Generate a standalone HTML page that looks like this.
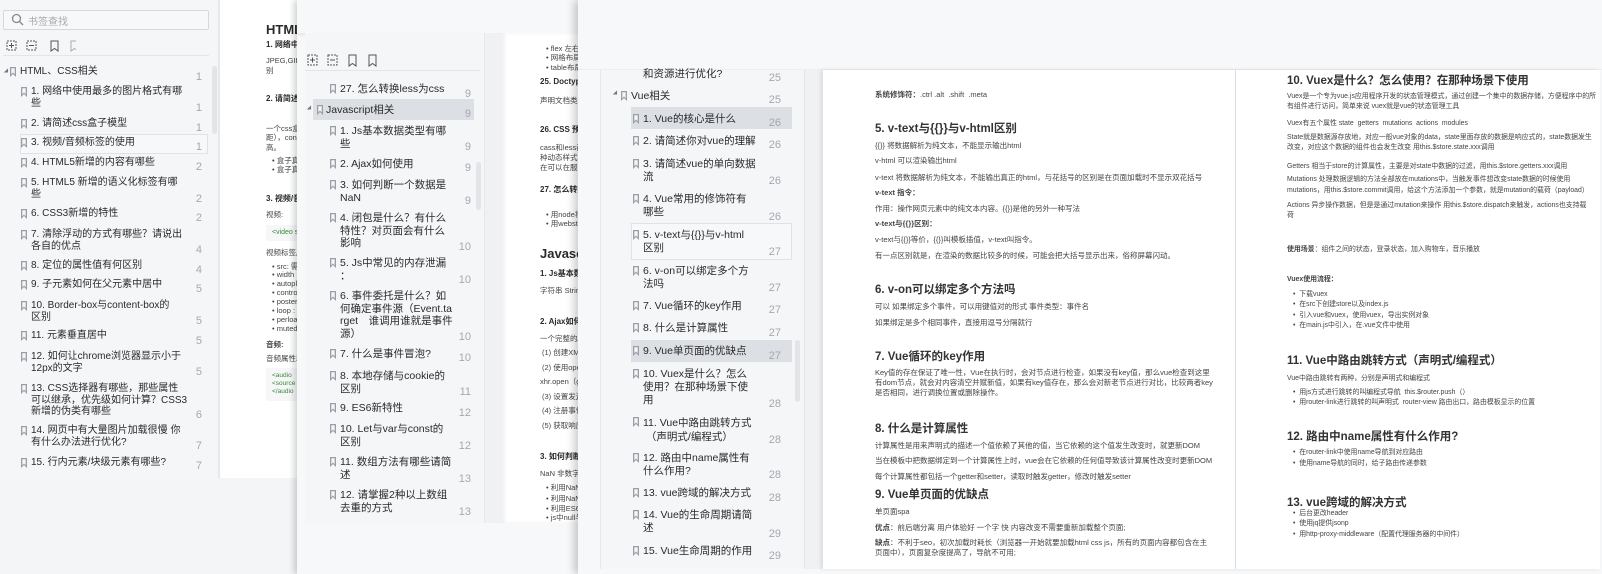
<!DOCTYPE html>
<html><head><meta charset="utf-8">
<style>
*{margin:0;padding:0;box-sizing:border-box}
body{width:1602px;height:574px;overflow:hidden;background:#f4f5f7;position:relative;font-family:"Liberation Sans","Noto Sans CJK SC",sans-serif;color:#2b2b2b}
.a{position:absolute}
.t{position:absolute;white-space:nowrap}
.win{position:absolute;overflow:hidden}
.it{position:absolute;font-size:10px;line-height:11.7px;color:#2a2a2a;white-space:nowrap}
.w2 .it{font-size:10.5px;line-height:12.5px}
.w3 .it{font-size:10.5px;line-height:13px}
.n{position:absolute;font-size:11px;color:#a3a8b0;text-align:right;width:20px}
.bm{position:absolute;width:6px;height:10px;background:#9a9ea6;clip-path:polygon(0 0,100% 0,100% 100%,50% 70%,0 100%)}
.bm::after{content:"";position:absolute;left:1.3px;top:1.3px;width:3.4px;height:6px;background:#f5f6f8;clip-path:polygon(0 0,100% 0,100% 100%,50% 70%,0 100%)}
.hl{position:absolute;background:#dcdfe4}
.bx{position:absolute;border:1px solid #dfe2e6;background:#f7f8fa}
.p{font-size:7.5px;color:#444}
.q{font-size:6.9px;color:#444}
.h{font-size:11.5px;font-weight:bold;color:#333}
.b{font-weight:bold}
.tri{position:absolute;width:0;height:0;border-left:3px solid transparent;border-right:3px solid transparent;border-top:4px solid #777}
</style></head><body>

<!-- WINDOW 1 -->
<div class="win" style="left:0;top:0;width:300px;height:478px;background:#f5f6f8">
  <div class="a" style="left:3px;top:10px;width:206px;height:20px;border:1px solid #d5d8dd;border-radius:2px;background:#f7f8fa"></div>
  <svg class="a" style="left:11px;top:13px" width="13" height="13"><circle cx="5.5" cy="5.5" r="4" fill="none" stroke="#888" stroke-width="1.3"/><line x1="8.5" y1="8.5" x2="12" y2="12" stroke="#888" stroke-width="1.3"/></svg>
  <div class="t" style="left:28px;top:13px;font-size:10px;color:#aaa">书签查找</div>
  <svg class="a" style="left:6px;top:40px" width="70" height="12" fill="none" stroke="#555" stroke-width="1"><rect x="1" y="1" width="9" height="9" stroke-dasharray="2 1"/><path d="M3 5.5h5M5.5 3v5"/><rect x="21" y="1" width="9" height="9" stroke-dasharray="2 1"/><path d="M23 5.5h5"/><path d="M45 1h7v10l-3.5-2.5L45 11z"/><path d="M65 1h7v10l-3.5-2.5L65 11z" stroke="#aaa"/></svg>
  <div class="a" style="left:3px;top:55px;width:206px;height:1px;background:#e3e5e8"></div>
  <div class="a" style="left:212px;top:66px;width:5px;height:68px;background:#e2e4e7;border-radius:3px"></div>
  <div class="tri" style="left:4px;top:70px;transform:rotate(-45deg);border-top-width:3px"></div>
  <div class="bm" style="left:10px;top:67px"></div><div class="it" style="left:20px;top:66px">HTML、CSS相关</div><div class="n" style="left:182px;top:71px">1</div>
  <div class="bm" style="left:21px;top:87px"></div><div class="it" style="left:31px;top:86px">1. 网络中使用最多的图片格式有哪<br>些</div><div class="n" style="left:182px;top:102px">1</div>
  <div class="bm" style="left:21px;top:119px"></div><div class="it" style="left:31px;top:118px">2. 请简述css盒子模型</div><div class="n" style="left:182px;top:122px">1</div>
  <div class="bx" style="left:20px;top:134px;width:188px;height:20px"></div>
  <div class="bm" style="left:21px;top:138px"></div><div class="it" style="left:31px;top:137px">3. 视频/音频标签的使用</div><div class="n" style="left:182px;top:141px">1</div>
  <div class="bm" style="left:21px;top:158px"></div><div class="it" style="left:31px;top:157px">4. HTML5新增的内容有哪些</div><div class="n" style="left:182px;top:161px">2</div>
  <div class="bm" style="left:21px;top:178px"></div><div class="it" style="left:31px;top:177px">5. HTML5 新增的语义化标签有哪<br>些</div><div class="n" style="left:182px;top:193px">2</div>
  <div class="bm" style="left:21px;top:209px"></div><div class="it" style="left:31px;top:208px">6. CSS3新增的特性</div><div class="n" style="left:182px;top:212px">2</div>
  <div class="bm" style="left:21px;top:230px"></div><div class="it" style="left:31px;top:229px">7. 清除浮动的方式有哪些？请说出<br>各自的优点</div><div class="n" style="left:182px;top:244px">4</div>
  <div class="bm" style="left:21px;top:261px"></div><div class="it" style="left:31px;top:260px">8. 定位的属性值有何区别</div><div class="n" style="left:182px;top:264px">4</div>
  <div class="bm" style="left:21px;top:280px"></div><div class="it" style="left:31px;top:279px">9. 子元素如何在父元素中居中</div><div class="n" style="left:182px;top:283px">5</div>
  <div class="bm" style="left:21px;top:301px"></div><div class="it" style="left:31px;top:300px">10. Border-box与content-box的<br>区别</div><div class="n" style="left:182px;top:315px">5</div>
  <div class="bm" style="left:21px;top:331px"></div><div class="it" style="left:31px;top:330px">11. 元素垂直居中</div><div class="n" style="left:182px;top:335px">5</div>
  <div class="bm" style="left:21px;top:352px"></div><div class="it" style="left:31px;top:351px">12. 如何让chrome浏览器显示小于<br>12px的文字</div><div class="n" style="left:182px;top:366px">5</div>
  <div class="bm" style="left:21px;top:384px"></div><div class="it" style="left:31px;top:383px">13. CSS选择器有哪些，那些属性<br>可以继承，优先级如何计算？CSS3<br>新增的伪类有哪些</div><div class="n" style="left:182px;top:409px">6</div>
  <div class="bm" style="left:21px;top:426px"></div><div class="it" style="left:31px;top:425px">14. 网页中有大量图片加载很慢 你<br>有什么办法进行优化?</div><div class="n" style="left:182px;top:440px">7</div>
  <div class="bm" style="left:21px;top:458px"></div><div class="it" style="left:31px;top:457px">15. 行内元素/块级元素有哪些?</div><div class="n" style="left:182px;top:460px">7</div>
  <div class="a" style="left:218px;top:0;width:2px;height:478px;background:#e6e8eb"></div>
  <div class="a" style="left:220px;top:0;width:80px;height:478px;background:#fff;overflow:hidden">
    <div class="t" style="left:46px;top:19px;font-size:13px;font-weight:bold">HTML、CSS相关</div>
    <div class="t" style="left:46px;top:39px;font-size:8px;font-weight:bold">1. 网络中使用最多的图片</div>
    <div class="t p" style="left:46px;top:56px">JPEG,GIF,PNG</div><div class="t p" style="left:46px;top:65px">别</div>
    <div class="t" style="left:46px;top:93px;font-size:8px;font-weight:bold">2. 请简述css盒子模型</div>
    <div class="t p" style="left:46px;top:123px">一个css盒子从外</div><div class="t p" style="left:46px;top:132px">距），content</div><div class="t p" style="left:46px;top:142px">高。</div>
    <div class="t p" style="left:52px;top:155px">• 盒子真实</div><div class="t p" style="left:52px;top:164px">• 盒子真实</div>
    <div class="t" style="left:46px;top:193px;font-size:8px;font-weight:bold">3. 视频/音频</div>
    <div class="t p" style="left:46px;top:209px">视频:</div>
    <div class="a" style="left:46px;top:225px;width:40px;height:16px;background:#f6f7f8"></div><div class="t" style="left:52px;top:229px;font-size:7px;color:#3a8a3a">&lt;video src</div>
    <div class="t p" style="left:46px;top:247px">视频标签属性</div>
    <div class="t p" style="left:52px;top:261px">• src: 需</div><div class="t p" style="left:52px;top:270px">• width</div><div class="t p" style="left:52px;top:279px">• autopl</div><div class="t p" style="left:52px;top:288px">• contro</div><div class="t p" style="left:52px;top:297px">• poster</div><div class="t p" style="left:52px;top:306px">• loop :</div><div class="t p" style="left:52px;top:315px">• perloa</div><div class="t p" style="left:52px;top:324px">• muted</div>
    <div class="t p" style="left:46px;top:339px;font-weight:bold">音频:</div>
    <div class="t p" style="left:46px;top:353px">音频属性和</div>
    <div class="a" style="left:46px;top:368px;width:40px;height:33px;background:#f6f7f8"></div>
    <div class="t" style="left:52px;top:372px;font-size:6.5px;color:#3a8a3a">&lt;audio</div><div class="t" style="left:52px;top:380px;font-size:6.5px;color:#3a8a3a">&lt;source</div><div class="t" style="left:52px;top:388px;font-size:6.5px;color:#3a8a3a">&lt;/audio</div>
  </div>
</div>

<!-- WINDOW 2 -->
<div class="win w2" style="left:297px;top:0;width:283px;height:574px;background:#f7f8fa;box-shadow:-3px 0 6px rgba(0,0,0,.18)">
  <div class="a" style="left:9px;top:22px;width:168px;height:21px;border:1px solid #d5d8dd;background:#f7f8fa"></div>
  <div class="t" style="left:39px;top:29px;font-size:10px;color:#aaa">书签查找</div>
  <div class="a" style="left:0;top:0;width:283px;height:33px;background:#f7f8fa;box-shadow:0 2px 3px rgba(0,0,0,.08)"></div>
  <div class="a" style="left:8px;top:33px;width:180px;height:490px;background:#f5f6f8"></div>
  <svg class="a" style="left:10px;top:54px" width="80" height="13" fill="none" stroke="#555" stroke-width="1"><rect x="1" y="1" width="9" height="10" stroke-dasharray="2 1"/><path d="M3 6h5M5.5 3.5v5"/><rect x="21" y="1" width="9" height="10" stroke-dasharray="2 1"/><path d="M23 6h5"/><path d="M42 1h7v11l-3.5-2.5L42 12z"/><path d="M62 1h7v11l-3.5-2.5L62 12z"/></svg>
  <div class="a" style="left:8px;top:70px;width:175px;height:1px;background:#e3e5e8"></div>
  <div class="a" style="left:187px;top:33px;width:1px;height:490px;background:#e6e8eb"></div>
  <div class="a" style="left:179px;top:162px;width:5px;height:48px;background:#e2e4e7;border-radius:3px"></div>
  <div class="bm" style="left:33px;top:84px"></div><div class="it" style="left:43px;top:83px">27. 怎么转换less为css</div><div class="n" style="left:154px;top:88px">9</div>
  <div class="hl" style="left:16px;top:99px;width:161px;height:21px"></div>
  <div class="tri" style="left:10px;top:107px;transform:rotate(-45deg);border-top-width:3px"></div>
  <div class="bm" style="left:20px;top:105px"></div><div class="it" style="left:29px;top:104px">Javascript相关</div><div class="n" style="left:154px;top:108px">9</div>
  <div class="bm" style="left:33px;top:126px"></div><div class="it" style="left:43px;top:125px">1. Js基本数据类型有哪<br>些</div><div class="n" style="left:154px;top:141px">9</div>
  <div class="bm" style="left:33px;top:159px"></div><div class="it" style="left:43px;top:158px">2. Ajax如何使用</div><div class="n" style="left:154px;top:162px">9</div>
  <div class="bm" style="left:33px;top:180px"></div><div class="it" style="left:43px;top:179px">3. 如何判断一个数据是<br>NaN</div><div class="n" style="left:154px;top:195px">9</div>
  <div class="bm" style="left:33px;top:213px"></div><div class="it" style="left:43px;top:212px">4. 闭包是什么？有什么<br>特性？对页面会有什么<br>影响</div><div class="n" style="left:154px;top:241px">10</div>
  <div class="bm" style="left:33px;top:258px"></div><div class="it" style="left:43px;top:257px">5. Js中常见的内存泄漏<br>：</div><div class="n" style="left:154px;top:274px">10</div>
  <div class="bm" style="left:33px;top:291px"></div><div class="it" style="left:43px;top:290px">6. 事件委托是什么？如<br>何确定事件源（Event.ta<br>rget　谁调用谁就是事件<br>源）</div><div class="n" style="left:154px;top:331px">10</div>
  <div class="bm" style="left:33px;top:349px"></div><div class="it" style="left:43px;top:348px">7. 什么是事件冒泡?</div><div class="n" style="left:154px;top:352px">10</div>
  <div class="bm" style="left:33px;top:371px"></div><div class="it" style="left:43px;top:370px">8. 本地存储与cookie的<br>区别</div><div class="n" style="left:154px;top:386px">11</div>
  <div class="bm" style="left:33px;top:403px"></div><div class="it" style="left:43px;top:402px">9. ES6新特性</div><div class="n" style="left:154px;top:407px">12</div>
  <div class="bm" style="left:33px;top:424px"></div><div class="it" style="left:43px;top:423px">10. Let与var与const的<br>区别</div><div class="n" style="left:154px;top:440px">12</div>
  <div class="bm" style="left:33px;top:457px"></div><div class="it" style="left:43px;top:456px">11. 数组方法有哪些请简<br>述</div><div class="n" style="left:154px;top:473px">13</div>
  <div class="bm" style="left:33px;top:490px"></div><div class="it" style="left:43px;top:489px">12. 请掌握2种以上数组<br>去重的方式</div><div class="n" style="left:154px;top:506px">13</div>
  <div class="a" style="left:188px;top:33px;width:18px;height:490px;background:#f0f1f3"></div>
  <div class="a" style="left:206px;top:33px;width:80px;height:490px;background:#fff;overflow:hidden;box-shadow:inset 2px 0 3px rgba(0,0,0,.06)">
    <div class="t p" style="left:43px;top:10px">• flex 左右</div><div class="t p" style="left:43px;top:19px">• 网格布局</div><div class="t p" style="left:43px;top:29px">• table布局</div>
    <div class="t" style="left:37px;top:44px;font-size:8px;font-weight:bold">25. Doctype</div>
    <div class="t p" style="left:37px;top:62px">声明文档类型</div>
    <div class="t" style="left:37px;top:91px;font-size:8px;font-weight:bold">26. CSS 预处</div>
    <div class="t p" style="left:37px;top:109px">cass和less都是</div><div class="t p" style="left:37px;top:119px">种动态样式语</div><div class="t p" style="left:37px;top:129px">在可以在服务</div>
    <div class="t" style="left:37px;top:151px;font-size:8px;font-weight:bold">27. 怎么转换</div>
    <div class="t p" style="left:43px;top:176px">• 用node将</div><div class="t p" style="left:43px;top:185px">• 用webstorm</div>
    <div class="t" style="left:37px;top:213px;font-size:13px;font-weight:bold">Javascript</div>
    <div class="t" style="left:37px;top:235px;font-size:8px;font-weight:bold">1. Js基本数据</div>
    <div class="t p" style="left:37px;top:252px">字符串 String</div>
    <div class="t" style="left:37px;top:283px;font-size:8px;font-weight:bold">2. Ajax如何</div>
    <div class="t p" style="left:37px;top:300px">一个完整的Ajax</div>
    <div class="t p" style="left:39px;top:314px">(1) 创建XML</div><div class="t p" style="left:39px;top:329px">(2) 使用open</div><div class="t p" style="left:37px;top:343px">xhr.open（get</div><div class="t p" style="left:39px;top:358px">(3) 设置发送</div><div class="t p" style="left:39px;top:372px">(4) 注册事件</div><div class="t p" style="left:39px;top:387px">(5) 获取响应</div>
    <div class="t" style="left:37px;top:418px;font-size:8px;font-weight:bold">3. 如何判断</div>
    <div class="t p" style="left:37px;top:435px">NaN 非数字 但</div>
    <div class="t p" style="left:43px;top:449px">• 利用NaN</div><div class="t p" style="left:43px;top:460px">• 利用NaN</div><div class="t p" style="left:43px;top:470px">• 利用ES6</div><div class="t p" style="left:43px;top:479px">• js中null与</div>
  </div>
</div>

<!-- WINDOW 3 -->
<div class="win w3" style="left:578px;top:0;width:1024px;height:574px;background:#f7f8fa;box-shadow:-4px 0 8px rgba(0,0,0,.2)">
  <div class="a" style="left:0;top:69px;width:1024px;height:1px;background:#eceef1"></div>
  <div class="a" style="left:22px;top:70px;width:205px;height:499px;background:#f5f6f8;border-left:1px solid #e6e8eb"></div>
  <div class="it" style="left:65px;top:68px">和资源进行优化?</div><div class="n" style="left:183px;top:72px">25</div>
  <div class="tri" style="left:35px;top:92px;transform:rotate(-45deg);border-top-width:3px"></div>
  <div class="bm" style="left:43px;top:91px"></div><div class="it" style="left:53px;top:90px">Vue相关</div><div class="n" style="left:183px;top:94px">25</div>
  <div class="hl" style="left:53px;top:107px;width:161px;height:22px"></div>
  <div class="bm" style="left:55px;top:114px"></div><div class="it" style="left:65px;top:113px">1. Vue的核心是什么</div><div class="n" style="left:183px;top:117px">26</div>
  <div class="bm" style="left:55px;top:136px"></div><div class="it" style="left:65px;top:135px">2. 请简述你对vue的理解</div><div class="n" style="left:183px;top:139px">26</div>
  <div class="bm" style="left:55px;top:159px"></div><div class="it" style="left:65px;top:158px">3. 请简述vue的单向数据<br>流</div><div class="n" style="left:183px;top:175px">26</div>
  <div class="bm" style="left:55px;top:194px"></div><div class="it" style="left:65px;top:193px">4. Vue常用的修饰符有<br>哪些</div><div class="n" style="left:183px;top:211px">26</div>
  <div class="bx" style="left:53px;top:223px;width:161px;height:37px"></div>
  <div class="bm" style="left:55px;top:230px"></div><div class="it" style="left:65px;top:229px">5. v-text与{{}}与v-html<br>区别</div><div class="n" style="left:183px;top:246px">27</div>
  <div class="bm" style="left:55px;top:266px"></div><div class="it" style="left:65px;top:265px">6. v-on可以绑定多个方<br>法吗</div><div class="n" style="left:183px;top:282px">27</div>
  <div class="bm" style="left:55px;top:301px"></div><div class="it" style="left:65px;top:300px">7. Vue循环的key作用</div><div class="n" style="left:183px;top:304px">27</div>
  <div class="bm" style="left:55px;top:323px"></div><div class="it" style="left:65px;top:322px">8. 什么是计算属性</div><div class="n" style="left:183px;top:327px">27</div>
  <div class="hl" style="left:53px;top:340px;width:161px;height:22px"></div>
  <div class="bm" style="left:55px;top:346px"></div><div class="it" style="left:65px;top:345px">9. Vue单页面的优缺点</div><div class="n" style="left:183px;top:350px">27</div>
  <div class="bm" style="left:55px;top:369px"></div><div class="it" style="left:65px;top:368px">10. Vuex是什么？怎么<br>使用？在那种场景下使<br>用</div><div class="n" style="left:183px;top:398px">28</div>
  <div class="bm" style="left:55px;top:417px"></div><div class="it" style="left:65px;top:416px;line-height:14px">11. Vue中路由跳转方式<br>&nbsp;（声明式/编程式）</div><div class="n" style="left:183px;top:434px">28</div>
  <div class="bm" style="left:55px;top:453px"></div><div class="it" style="left:65px;top:452px">12. 路由中name属性有<br>什么作用?</div><div class="n" style="left:183px;top:469px">28</div>
  <div class="bm" style="left:55px;top:488px"></div><div class="it" style="left:65px;top:487px">13. vue跨域的解决方式</div><div class="n" style="left:183px;top:492px">28</div>
  <div class="bm" style="left:55px;top:510px"></div><div class="it" style="left:65px;top:509px">14. Vue的生命周期请简<br>述</div><div class="n" style="left:183px;top:528px">29</div>
  <div class="bm" style="left:55px;top:546px"></div><div class="it" style="left:65px;top:545px">15. Vue生命周期的作用</div><div class="n" style="left:183px;top:550px">29</div>
  <div class="a" style="left:217px;top:340px;width:5px;height:62px;background:#e2e4e7;border-radius:3px"></div>
  <div class="a" style="left:226px;top:70px;width:1px;height:499px;background:#e3e5e8"></div>
  <div class="a" style="left:227px;top:70px;width:18px;height:499px;background:#f0f1f3"></div>
  <div class="a" style="left:245px;top:70px;width:777px;height:499px;background:#fff;box-shadow:-2px 0 4px rgba(0,0,0,.1)">
    <div class="a" style="left:412px;top:0;width:1px;height:499px;background:#dadde1"></div>
  </div>
  <div class="t p" style="left:297px;top:89px"><b>系统修饰符：</b>.ctrl .alt &nbsp;.shift &nbsp;.meta</div>
  <div class="t h" style="left:297px;top:120px">5. v-text与{{}}与v-html区别</div>
  <div class="t p" style="left:297px;top:140px">{{}} 将数据解析为纯文本，不能显示输出html</div>
  <div class="t p" style="left:297px;top:155px">v-html 可以渲染输出html</div>
  <div class="t p" style="left:297px;top:172px">v-text 将数据解析为纯文本，不能输出真正的html，与花括号的区别是在页面加载时不显示双花括号</div>
  <div class="t p b" style="left:297px;top:187px">v-text 指令：</div>
  <div class="t p" style="left:297px;top:203px">作用：操作网页元素中的纯文本内容。{{}}是他的另外一种写法</div>
  <div class="t p b" style="left:297px;top:218px">v-text与{{}}区别：</div>
  <div class="t p" style="left:297px;top:234px">v-text与{{}}等价，{{}}叫模板插值，v-text叫指令。</div>
  <div class="t p" style="left:297px;top:250px">有一点区别就是，在渲染的数据比较多的时候，可能会把大括号显示出来，俗称屏幕闪动。</div>
  <div class="t h" style="left:297px;top:281px">6. v-on可以绑定多个方法吗</div>
  <div class="t p" style="left:297px;top:301px">可以 如果绑定多个事件，可以用键值对的形式 事件类型：事件名</div>
  <div class="t p" style="left:297px;top:317px">如果绑定是多个相同事件，直接用逗号分隔就行</div>
  <div class="t h" style="left:297px;top:348px">7. Vue循环的key作用</div>
  <div class="t p" style="left:297px;top:368px;line-height:10px">Key值的存在保证了唯一性，Vue在执行时，会对节点进行检查，如果没有key值，那么vue检查到这里<br>有dom节点，就会对内容清空并赋新值，如果有key值存在，那么会对新老节点进行对比，比较两者key<br>是否相同，进行调换位置或删除操作。</div>
  <div class="t h" style="left:297px;top:420px">8. 什么是计算属性</div>
  <div class="t p" style="left:297px;top:440px">计算属性是用来声明式的描述一个值依赖了其他的值，当它依赖的这个值发生改变时，就更新DOM</div>
  <div class="t p" style="left:297px;top:455px">当在模板中把数据绑定到一个计算属性上时，vue会在它依赖的任何值导致该计算属性改变时更新DOM</div>
  <div class="t p" style="left:297px;top:471px">每个计算属性都包括一个getter和setter，读取时触发getter，修改时触发setter</div>
  <div class="t h" style="left:297px;top:486px">9. Vue单页面的优缺点</div>
  <div class="t p" style="left:297px;top:506px">单页面spa</div>
  <div class="t p" style="left:297px;top:522px"><b>优点</b>：前后端分离 用户体验好 一个字 快 内容改变不需要重新加载整个页面;</div>
  <div class="t p" style="left:297px;top:538px;line-height:10px"><b>缺点</b>：不利于seo，初次加载时耗长（浏览器一开始就要加载html css js，所有的页面内容都包含在主<br>页面中），页面复杂度提高了，导航不可用;</div>
  <div class="t h" style="left:709px;top:72px">10. Vuex是什么？怎么使用？在那种场景下使用</div>
  <div class="t q" style="left:709px;top:92px;line-height:10px">Vuex是一个专为vue.js应用程序开发的状态管理模式，通过创建一个集中的数据存储，方便程序中的所<br>有组件进行访问，简单来说 vuex就是vue的状态管理工具</div>
  <div class="t q" style="left:709px;top:117px">Vuex有五个属性 state &nbsp;getters &nbsp;mutations &nbsp;actions &nbsp;modules</div>
  <div class="t q" style="left:709px;top:133px;line-height:10px">State就是数据源存放地，对应一般vue对象的data，state里面存放的数据是响应式的，state数据发生<br>改变，对应这个数据的组件也会发生改变 用this.$store.state.xxx调用</div>
  <div class="t q" style="left:709px;top:160px">Getters 相当于store的计算属性，主要是对state中数据的过滤，用this.$store.getters.xxx调用</div>
  <div class="t q" style="left:709px;top:175px;line-height:10.5px">Mutations 处理数据逻辑的方法全部放在mutations中，当触发事件想改变state数据的时候使用<br>mutations，用this.$store.commit调用，给这个方法添加一个参数，就是mutation的载荷（payload）</div>
  <div class="t q" style="left:709px;top:201px;line-height:10px">Actions 异步操作数据，但是是通过mutation来操作 用this.$store.dispatch来触发，actions也支持载<br>荷</div>
  <div class="t q" style="left:709px;top:243px"><b>使用场景</b>：组件之间的状态，登录状态，加入购物车，音乐播放</div>
  <div class="t q b" style="left:709px;top:273px">Vuex使用流程：</div>
  <div class="t q" style="left:715px;top:290px;line-height:10.3px">•&nbsp; 下载vuex<br>•&nbsp; 在src下创建store以及index.js<br>•&nbsp; 引入vue和vuex，使用vuex，导出实例对象<br>•&nbsp; 在main.js中引入，在.vue文件中使用</div>
  <div class="t h" style="left:709px;top:352px">11. Vue中路由跳转方式（声明式/编程式）</div>
  <div class="t q" style="left:709px;top:372px">Vue中路由跳转有两种，分别是声明式和编程式</div>
  <div class="t q" style="left:715px;top:388px;line-height:10.3px">•&nbsp; 用js方式进行跳转的叫编程式导航 &nbsp;this.$router.push（）<br>•&nbsp; 用router-link进行跳转的叫声明式 &nbsp;router-view 路由出口，路由模板显示的位置</div>
  <div class="t h" style="left:709px;top:428px">12. 路由中name属性有什么作用?</div>
  <div class="t q" style="left:715px;top:448px;line-height:10.5px">•&nbsp; 在router-link中使用name导航到对应路由<br>•&nbsp; 使用name导航的同时，给子路由传递参数</div>
  <div class="t h" style="left:709px;top:494px">13. vue跨域的解决方式</div>
  <div class="t q" style="left:715px;top:509px;line-height:10.3px">•&nbsp; 后台更改header<br>•&nbsp; 使用jq提供jsonp<br>•&nbsp; 用http-proxy-middleware（配置代理服务器的中间件）</div>
</div>
</body></html>
